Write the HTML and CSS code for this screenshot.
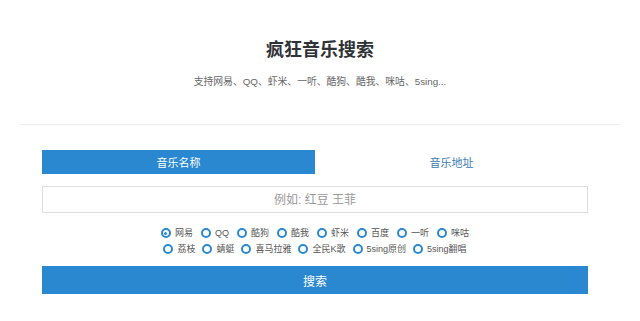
FILE: index.html
```html
<!DOCTYPE html>
<html lang="zh-CN">
<head>
<meta charset="UTF-8" />
<title>疯狂音乐搜索</title>
<link rel="stylesheet" href="styles.css">
</head>
<body>

<header class="head">
  <h1>疯狂音乐搜索</h1>
  <p class="sub">支持网易、QQ、虾米、一听、酷狗、酷我、咪咕、5sing...</p>
</header>

<div class="divider"></div>

<main class="panel">
  <div class="tabs">
    <div class="tab active">音乐名称</div>
    <div class="tab">音乐地址</div>
  </div>

  <input class="query" type="text" placeholder="例如: 红豆 王菲">

  <div class="sources">
    <div class="row">
      <label class="opt"><span class="dot on"></span>网易</label>
      <label class="opt"><span class="dot"></span>QQ</label>
      <label class="opt"><span class="dot"></span>酷狗</label>
      <label class="opt"><span class="dot"></span>酷我</label>
      <label class="opt"><span class="dot"></span>虾米</label>
      <label class="opt"><span class="dot"></span>百度</label>
      <label class="opt"><span class="dot"></span>一听</label>
      <label class="opt"><span class="dot"></span>咪咕</label>
    </div>
    <div class="row">
      <label class="opt"><span class="dot"></span>荔枝</label>
      <label class="opt"><span class="dot"></span>蜻蜓</label>
      <label class="opt"><span class="dot"></span>喜马拉雅</label>
      <label class="opt"><span class="dot"></span>全民K歌</label>
      <label class="opt"><span class="dot"></span>5sing原创</label>
      <label class="opt"><span class="dot"></span>5sing翻唱</label>
    </div>
  </div>

  <button class="go">搜索</button>
</main>

</body>
</html>
```

FILE: styles.css
```css
body {
  margin: 0;
  background: #fff;
  color: #333;
  font-family: "Liberation Sans", "Noto Sans CJK SC", sans-serif;
}
.head {
  text-align: center;
  padding-top: 39px;
}
h1 {
  margin: 0;
  font-size: 18px;
  line-height: 22px;
  font-weight: bold;
  color: #2f3237;
}
.sub {
  margin: 14px 0 0 0;
  font-size: 9.8px;
  line-height: 14px;
  color: #666;
}
.divider {
  margin: 35px 20px 0 20px;
  height: 1px;
  background: #eee;
  box-shadow: 0 1px 2px rgba(0, 0, 0, 0.03);
}
.panel {
  width: 546px;
  margin: 25px 0 0 42px;
}
.tabs {
  display: flex;
  height: 24px;
}
.tab {
  flex: 1;
  display: flex;
  align-items: center;
  justify-content: center;
  font-size: 11px;
  color: #3a7cb8;
}
.tab.active {
  background: #2a88d0;
  color: #fff;
}
.query {
  display: block;
  box-sizing: border-box;
  width: 100%;
  height: 27px;
  margin-top: 12px;
  border: 1px solid #ddd;
  text-align: center;
  font-family: inherit;
  font-size: 12px;
  outline: none;
}
.query::placeholder {
  color: #999;
}
.sources {
  margin-top: 14px;
  display: flex;
  flex-direction: column;
  align-items: center;
  gap: 4px;
}
.row {
  display: flex;
  gap: 8px;
}
.row + .row {
  gap: 7px;
}
.opt {
  display: flex;
  align-items: center;
  gap: 4px;
  font-size: 9px;
  line-height: 12px;
  color: #555;
}
.dot {
  box-sizing: border-box;
  width: 10px;
  height: 10px;
  border: 2px solid #2a88d0;
  border-radius: 50%;
  position: relative;
}
.dot.on::after {
  content: "";
  position: absolute;
  left: 1.5px;
  top: 1.5px;
  width: 3px;
  height: 3px;
  border-radius: 50%;
  background: #2a88d0;
}
.go {
  display: block;
  width: 100%;
  height: 28px;
  margin-top: 11px;
  border: 0;
  background: #2a88d0;
  color: #fff;
  font-family: inherit;
  font-size: 12px;
}
```
